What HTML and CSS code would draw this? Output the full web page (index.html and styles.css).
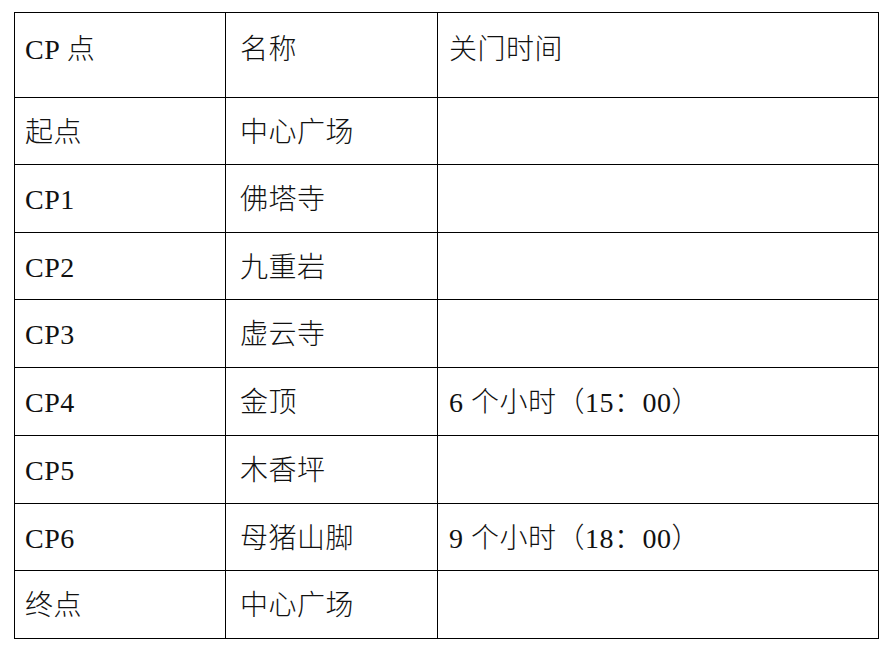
FILE: index.html
```html
<!DOCTYPE html>
<html lang="zh-CN">
<head>
<meta charset="utf-8">
<title>CP 点</title>
<link rel="stylesheet" href="styles.css">
</head>
<body>
<table class="cp-table">
  <colgroup>
    <col class="c1">
    <col class="c2">
    <col class="c3">
  </colgroup>
  <thead>
    <tr class="head">
      <th class="col1">CP 点</th>
      <th class="col2">名称</th>
      <th class="col3">关门时间</th>
    </tr>
  </thead>
  <tbody>
    <tr class="r67"><td class="col1">起点</td><td class="col2">中心广场</td><td class="col3"></td></tr>
    <tr class="r68"><td class="col1">CP1</td><td class="col2">佛塔寺</td><td class="col3"></td></tr>
    <tr class="r67"><td class="col1">CP2</td><td class="col2">九重岩</td><td class="col3"></td></tr>
    <tr class="r68"><td class="col1">CP3</td><td class="col2">虚云寺</td><td class="col3"></td></tr>
    <tr class="r68"><td class="col1">CP4</td><td class="col2">金顶</td><td class="col3">6 个小时（15：00）</td></tr>
    <tr class="r68"><td class="col1">CP5</td><td class="col2">木香坪</td><td class="col3"></td></tr>
    <tr class="r67"><td class="col1">CP6</td><td class="col2">母猪山脚</td><td class="col3">9 个小时（18：00）</td></tr>
    <tr class="r68"><td class="col1">终点</td><td class="col2">中心广场</td><td class="col3"></td></tr>
  </tbody>
</table>
</body>
</html>
```

FILE: styles.css
```css
html, body {
  margin: 0;
  padding: 0;
  background: #ffffff;
}

body {
  padding: 12px 0 0 14px;
  font-family: "Liberation Serif", "Noto Sans CJK SC", serif;
  color: #111111;
}

.cp-table {
  border-collapse: collapse;
  table-layout: fixed;
  width: 864px;
  font-size: 28px;
  line-height: 36px;
}

.c1 { width: 211px; }
.c2 { width: 212px; }
.c3 { width: 441px; }

.cp-table th,
.cp-table td {
  border: 1px solid #000000;
  text-align: left;
  font-weight: 300;
  white-space: nowrap;
  padding-top: 0;
  padding-bottom: 0;
  letter-spacing: 0.5px;
}

.cp-table th {
  vertical-align: top;
  padding-top: 19px;
}

.cp-table td {
  vertical-align: middle;
  padding-top: 3px;
}

.head { height: 85px; }
.r67 { height: 67px; }
.r68 { height: 68px; }

.col1 { padding-left: 10px; }
.col2 { padding-left: 14px; }
.col3 { padding-left: 11px; }
```
